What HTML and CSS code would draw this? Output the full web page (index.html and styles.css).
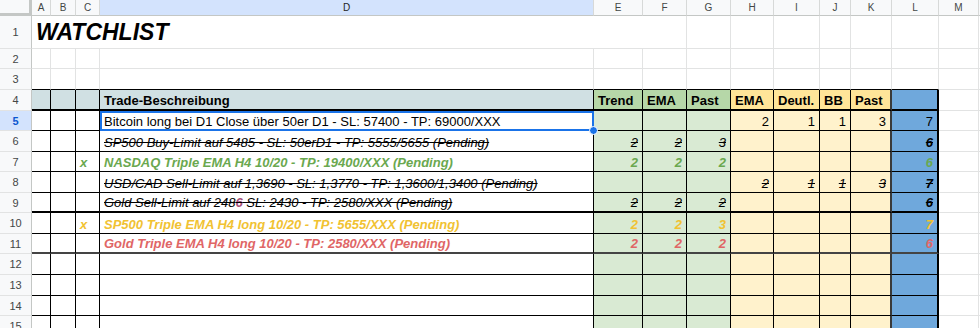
FILE: index.html
```html
<!DOCTYPE html>
<html lang="de">
<head>
    <meta charset="UTF-8">
    <title>Watchlist</title>
    <link rel="stylesheet" href="styles.css">
</head>
<body>

    <div class="sheet">
        <!-- Spaltenkoepfe -->
        <div class="row">
            <div class="corner"></div>
            <div class="ch">A</div>
            <div class="ch">B</div>
            <div class="ch">C</div>
            <div class="ch sel">D</div>
            <div class="ch">E</div>
            <div class="ch">F</div>
            <div class="ch">G</div>
            <div class="ch">H</div>
            <div class="ch">I</div>
            <div class="ch">J</div>
            <div class="ch">K</div>
            <div class="ch">L</div>
            <div class="ch">M</div>
            <div class="ch"></div>
        </div>

        <div class="row">
            <div class="rh">1</div>
            <div class="c title">WATCHLIST</div>
            <div class="c"></div><div class="c"></div><div class="c"></div><div class="c"></div>
            <div class="c"></div><div class="c"></div><div class="c"></div><div class="c"></div>
        </div>

        <div class="row">
            <div class="rh">2</div>
            <div class="c"></div><div class="c"></div><div class="c"></div><div class="c"></div>
            <div class="c"></div><div class="c"></div><div class="c"></div><div class="c"></div>
            <div class="c"></div><div class="c"></div><div class="c"></div><div class="c"></div>
            <div class="c"></div><div class="c"></div>
        </div>

        <div class="row top">
            <div class="rh">3</div>
            <div class="c tt"></div><div class="c tt"></div><div class="c tt"></div><div class="c tt"></div>
            <div class="c tt"></div><div class="c tt"></div><div class="c tt"></div><div class="c tt"></div>
            <div class="c tt"></div><div class="c tt"></div><div class="c tt"></div><div class="c tt"></div>
            <div class="c"></div><div class="c"></div>
        </div>

        <!-- Tabellenkopf -->
        <div class="row head thick">
            <div class="rh">4</div>
            <div class="c t hd"></div>
            <div class="c t hd"></div>
            <div class="c t hd"></div>
            <div class="c t hd">Trade-Beschreibung</div>
            <div class="c t gh">Trend</div>
            <div class="c t gh">EMA</div>
            <div class="c t gh">Past</div>
            <div class="c t yh">EMA</div>
            <div class="c t yh">Deutl.</div>
            <div class="c t yh">BB</div>
            <div class="c t yh k">Past</div>
            <div class="c t lb l"></div>
            <div class="c"></div><div class="c"></div>
        </div>

        <div class="row">
            <div class="rh sel">5</div>
            <div class="c t"></div>
            <div class="c t"></div>
            <div class="c t"></div>
            <div class="c t cur">Bitcoin long bei D1 Close über 50er D1 - SL: 57400 - TP: 69000/XXX</div>
            <div class="c t gr n"></div>
            <div class="c t gr n"></div>
            <div class="c t gr n"></div>
            <div class="c t ye n">2</div>
            <div class="c t ye n">1</div>
            <div class="c t ye n">1</div>
            <div class="c t ye n k">3</div>
            <div class="c t lb n l">7</div>
            <div class="c"></div><div class="c"></div>
        </div>

        <div class="row strike">
            <div class="rh">6</div>
            <div class="c t"></div>
            <div class="c t"></div>
            <div class="c t"></div>
            <div class="c t">SP500 Buy-Limit auf 5485 - SL: 50erD1 - TP: 5555/5655 (Pending)</div>
            <div class="c t gr n">2</div>
            <div class="c t gr n">2</div>
            <div class="c t gr n">3</div>
            <div class="c t ye n"></div>
            <div class="c t ye n"></div>
            <div class="c t ye n"></div>
            <div class="c t ye n k"></div>
            <div class="c t lb n l bold">6</div>
            <div class="c plain"></div><div class="c plain"></div>
        </div>

        <div class="row green">
            <div class="rh">7</div>
            <div class="c t"></div>
            <div class="c t"></div>
            <div class="c t">x</div>
            <div class="c t">NASDAQ Triple EMA H4 10/20 - TP: 19400/XXX (Pending)</div>
            <div class="c t gr n">2</div>
            <div class="c t gr n">2</div>
            <div class="c t gr n">2</div>
            <div class="c t ye n"></div>
            <div class="c t ye n"></div>
            <div class="c t ye n"></div>
            <div class="c t ye n k"></div>
            <div class="c t lb n l">6</div>
            <div class="c"></div><div class="c"></div>
        </div>

        <div class="row strike">
            <div class="rh">8</div>
            <div class="c t"></div>
            <div class="c t"></div>
            <div class="c t"></div>
            <div class="c t">USD/CAD Sell-Limit auf 1,3690 - SL: 1,3770 - TP: 1,3600/1,3400 (Pending)</div>
            <div class="c t gr n"></div>
            <div class="c t gr n"></div>
            <div class="c t gr n"></div>
            <div class="c t ye n">2</div>
            <div class="c t ye n">1</div>
            <div class="c t ye n">1</div>
            <div class="c t ye n k">3</div>
            <div class="c t lb n l bold">7</div>
            <div class="c plain"></div><div class="c plain"></div>
        </div>

        <div class="row strike thick">
            <div class="rh">9</div>
            <div class="c t"></div>
            <div class="c t"></div>
            <div class="c t"></div>
            <div class="c t"><span>Gold Sell-Limit auf 248<span class="pink">6</span> SL: 2430 - TP: 2580/XXX (Pending)</span></div>
            <div class="c t gr n">2</div>
            <div class="c t gr n">2</div>
            <div class="c t gr n">2</div>
            <div class="c t ye n"></div>
            <div class="c t ye n"></div>
            <div class="c t ye n"></div>
            <div class="c t ye n k"></div>
            <div class="c t lb n l bold">6</div>
            <div class="c plain"></div><div class="c plain"></div>
        </div>

        <div class="row orange">
            <div class="rh">10</div>
            <div class="c t"></div>
            <div class="c t"></div>
            <div class="c t">x</div>
            <div class="c t">SP500 Triple EMA H4 long 10/20 - TP: 5655/XXX (Pending)</div>
            <div class="c t gr n">2</div>
            <div class="c t gr n">2</div>
            <div class="c t gr n">3</div>
            <div class="c t ye n"></div>
            <div class="c t ye n"></div>
            <div class="c t ye n"></div>
            <div class="c t ye n k"></div>
            <div class="c t lb n l">7</div>
            <div class="c"></div><div class="c"></div>
        </div>

        <div class="row red thick2">
            <div class="rh">11</div>
            <div class="c t"></div>
            <div class="c t"></div>
            <div class="c t"></div>
            <div class="c t">Gold Triple EMA H4 long 10/20 - TP: 2580/XXX (Pending)</div>
            <div class="c t gr n">2</div>
            <div class="c t gr n">2</div>
            <div class="c t gr n">2</div>
            <div class="c t ye n"></div>
            <div class="c t ye n"></div>
            <div class="c t ye n"></div>
            <div class="c t ye n k"></div>
            <div class="c t lb n l">6</div>
            <div class="c"></div><div class="c"></div>
        </div>

        <!-- leere Zeilen -->
        <div class="row">
            <div class="rh">12</div>
            <div class="c t"></div><div class="c t"></div><div class="c t"></div><div class="c t"></div>
            <div class="c t gr"></div><div class="c t gr"></div><div class="c t gr"></div>
            <div class="c t ye"></div><div class="c t ye"></div><div class="c t ye"></div><div class="c t ye k"></div>
            <div class="c t lb l"></div>
            <div class="c"></div><div class="c"></div>
        </div>

        <div class="row">
            <div class="rh">13</div>
            <div class="c t"></div><div class="c t"></div><div class="c t"></div><div class="c t"></div>
            <div class="c t gr"></div><div class="c t gr"></div><div class="c t gr"></div>
            <div class="c t ye"></div><div class="c t ye"></div><div class="c t ye"></div><div class="c t ye k"></div>
            <div class="c t lb l"></div>
            <div class="c"></div><div class="c"></div>
        </div>

        <div class="row">
            <div class="rh">14</div>
            <div class="c t"></div><div class="c t"></div><div class="c t"></div><div class="c t"></div>
            <div class="c t gr"></div><div class="c t gr"></div><div class="c t gr"></div>
            <div class="c t ye"></div><div class="c t ye"></div><div class="c t ye"></div><div class="c t ye k"></div>
            <div class="c t lb l"></div>
            <div class="c"></div><div class="c"></div>
        </div>

        <div class="row">
            <div class="rh">15</div>
            <div class="c t"></div><div class="c t"></div><div class="c t"></div><div class="c t"></div>
            <div class="c t gr"></div><div class="c t gr"></div><div class="c t gr"></div>
            <div class="c t ye"></div><div class="c t ye"></div><div class="c t ye"></div><div class="c t ye k"></div>
            <div class="c t lb l"></div>
            <div class="c"></div><div class="c"></div>
        </div>
    </div>

</body>
</html>
```

FILE: styles.css
```css
body {
    margin: 0;
    padding: 0;
    background-color: #ffffff;
    font-family: "Liberation Sans", Arial, sans-serif;
    color: #000;
    overflow: hidden;
}
.sheet {
    display: grid;
    grid-template-columns: 32px 19px 25px 24px 494px 49px 44px 44px 43px 46px 31px 41px 47px 40px 1fr;
    grid-template-rows: 16px 33px 20px 21px 21px 20px 21px 20px 21px 20px 21px 20px 21px 21px 20px 21px;
    width: 980px;
    height: 328px;
    overflow: hidden;
}
.row {
    display: contents;
}

/* Kopfzeilen */
.corner {
    background-color: #f8f9fa;
    border-right: 3px solid #c4c7c5;
    border-bottom: 3px solid #c4c7c5;
}
.ch {
    background-color: #f8f9fa;
    border-right: 1px solid #d7d9d8;
    border-bottom: 1px solid #c4c7c5;
    font-size: 10px;
    color: #444746;
    display: flex;
    align-items: center;
    justify-content: center;
}
.rh {
    background-color: #f8f9fa;
    border-right: 1px solid #c4c7c5;
    border-bottom: 1px solid #e2e3e3;
    font-size: 11px;
    color: #444746;
    display: flex;
    align-items: center;
    justify-content: center;
}
.ch.sel, .rh.sel {
    background-color: #d3e3fd;
    color: #0b57d0;
    font-weight: bold;
}
.ch.sel {
    color: #1f1f1f;
    font-weight: normal;
}

/* Zellen */
.c {
    border-right: 1px solid #e2e3e3;
    border-bottom: 1px solid #e2e3e3;
    font-size: 13px;
    line-height: 15px;
    padding: 0 4px 1px 4px;
    display: flex;
    align-items: flex-end;
    white-space: nowrap;
    overflow: hidden;
    min-width: 0;
}
.title {
    grid-column: span 6;
    font-size: 23px;
    line-height: 28px;
    font-weight: bold;
    font-style: italic;
    padding-bottom: 2px;
}
.tt {
    border-bottom-color: #000;
}
.t {
    border-right-color: #000;
    border-bottom-color: #000;
}
.t.k {
    border-right: 2px solid #3a3a3a;
}
.t.l {
    border-right: 2px solid #000;
}
.thick .t {
    border-bottom-width: 2px;
}
.thick2 .t {
    border-bottom: 2px solid #444;
}
.n {
    justify-content: flex-end;
}

/* Farben */
.hd { background-color: #d0e0e3; }
.gh { background-color: #b6d7a8; }
.yh { background-color: #ffe599; }
.lb { background-color: #6fa8dc; }
.gr { background-color: #d9ead3; }
.ye { background-color: #fff2cc; }

.head .c {
    font-weight: bold;
}
.strike .c {
    font-style: italic;
    text-decoration: line-through;
}
.strike .c.plain {
    text-decoration: none;
}
.strike .bold {
    font-weight: bold;
}
.green .c {
    color: #6aa84f;
    font-weight: bold;
    font-style: italic;
}
.orange .c {
    color: #f1c232;
    font-weight: bold;
    font-style: italic;
}
.red .c {
    color: #e06666;
    font-weight: bold;
    font-style: italic;
}
.pink {
    color: #a64d79;
    font-weight: bold;
}

/* aktive Zelle D5 */
.cur {
    position: relative;
    overflow: visible;
}
.cur::after {
    content: "";
    position: absolute;
    left: 0;
    top: 0;
    right: -1px;
    bottom: -1px;
    border: 2px solid #1a73e8;
    z-index: 2;
}
.cur::before {
    content: "";
    position: absolute;
    right: -5px;
    bottom: -5px;
    width: 7px;
    height: 7px;
    border-radius: 50%;
    background-color: #1a73e8;
    border: 1px solid #fff;
    z-index: 3;
}
```
